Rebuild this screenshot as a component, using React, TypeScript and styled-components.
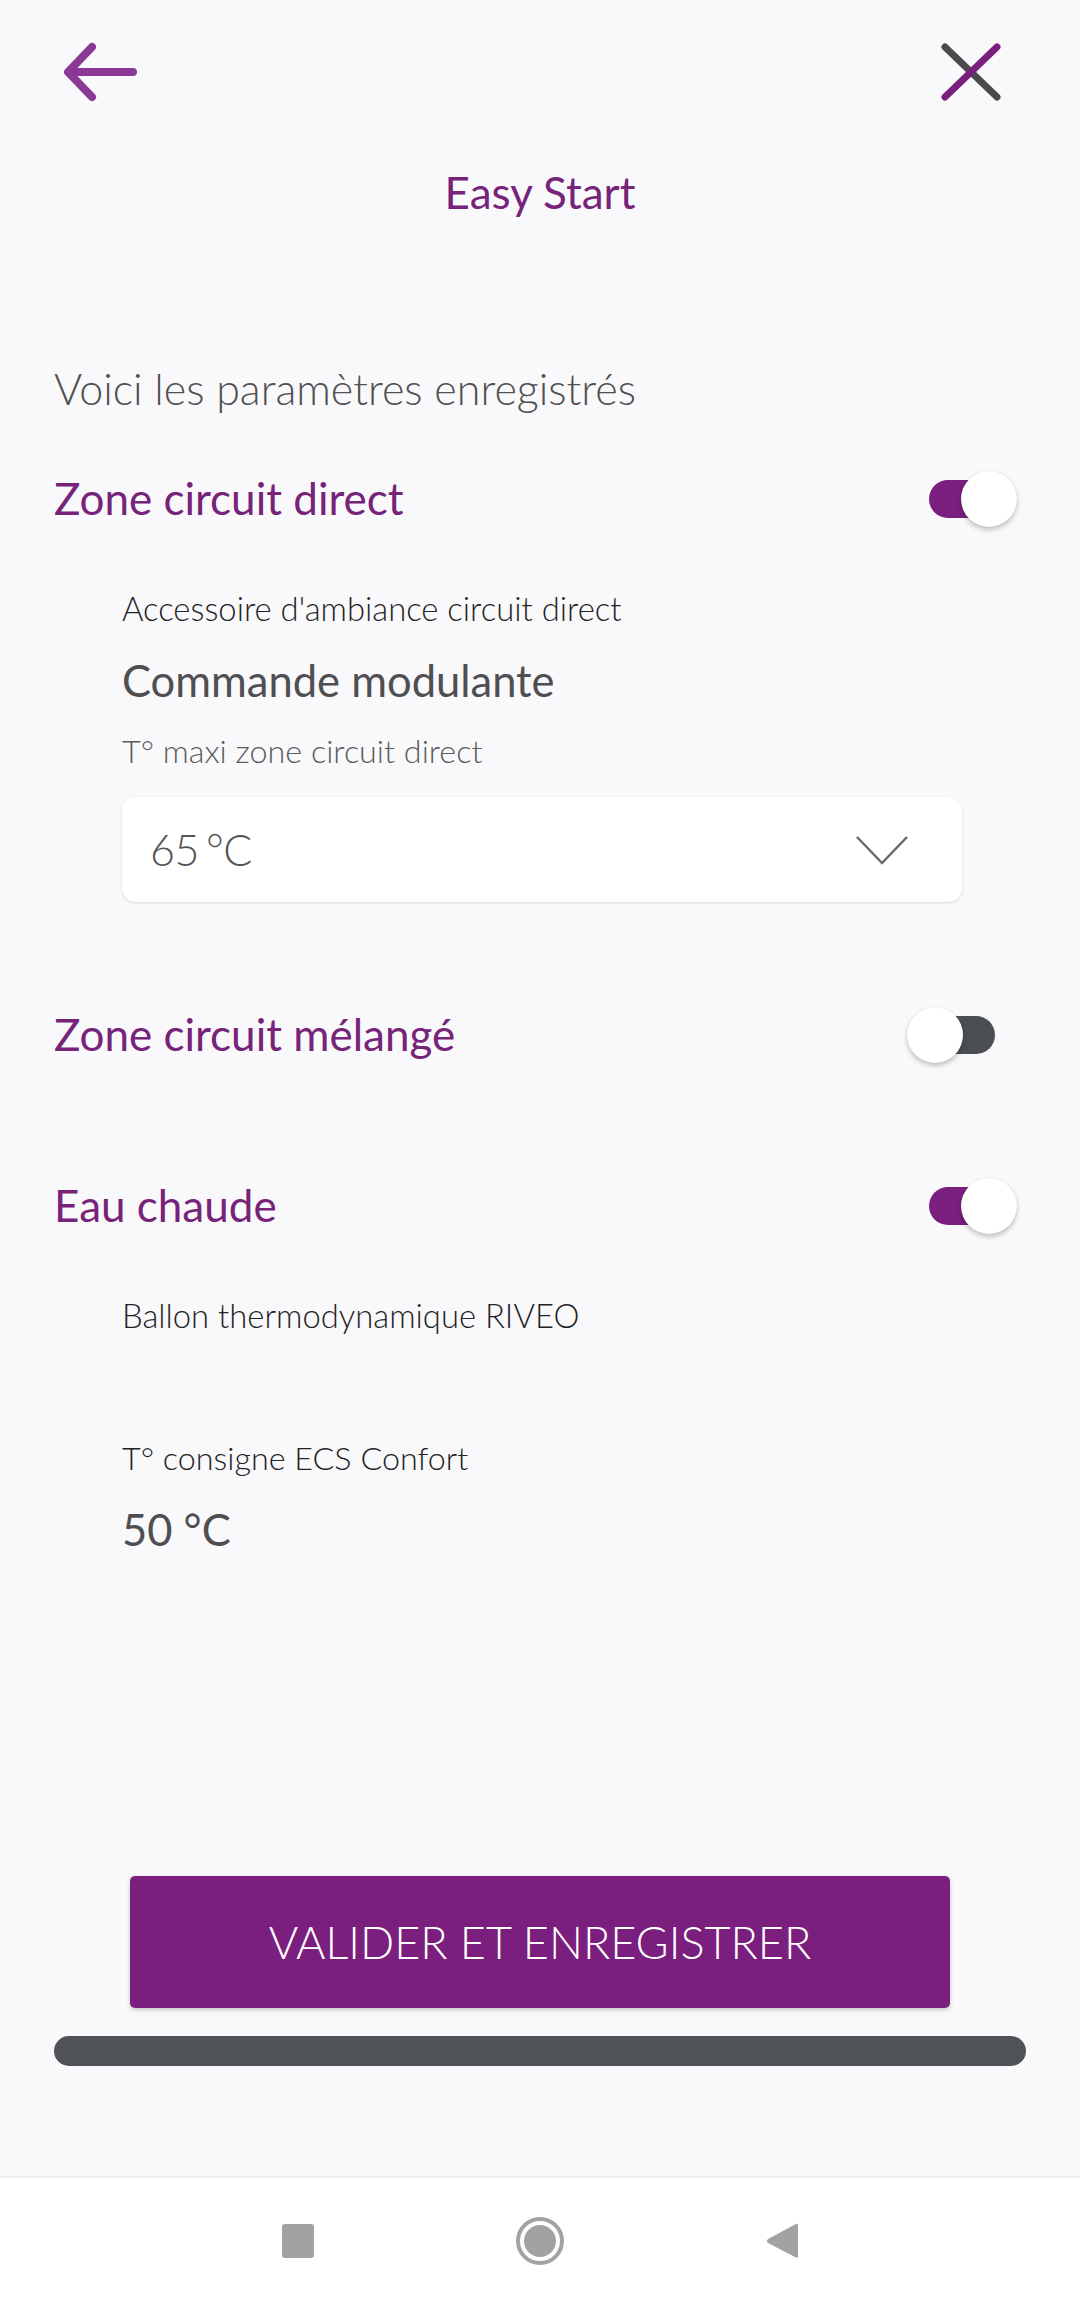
import React, { useState } from 'react';
import styled, { createGlobalStyle } from 'styled-components';

const GlobalStyle = createGlobalStyle`
  html, body {
    margin: 0;
    padding: 0;
    background: #f9f8fa;
  }
  body {
    font-family: Lato, "Open Sans", sans-serif;
  }
  * {
    box-sizing: border-box;
  }
`;

const lightFont = `"Lato Light", Lato, "Open Sans", sans-serif`;

const Screen = styled.div`
  width: 1080px;
  height: 2305px;
  display: flex;
  flex-direction: column;
  background: #f9f8fa;
  overflow: hidden;
`;

const TopBar = styled.div`
  height: 144px;
  display: flex;
  align-items: center;
  justify-content: space-between;
  padding: 0 77px 0 60px;
`;

const IconButton = styled.button`
  border: none;
  background: transparent;
  padding: 0;
  display: flex;
  cursor: pointer;
`;

const Title = styled.h1`
  margin: 23px 0 0 0;
  font-size: 44px;
  line-height: 50px;
  font-weight: 400;
  color: #762379;
  text-align: center;
`;

const Content = styled.div`
  padding: 0 85px 0 54px;
  display: flex;
  flex-direction: column;
`;

const Intro = styled.p`
  margin: 146px 0 0 0;
  font-family: ${lightFont};
  font-size: 43px;
  line-height: 52px;
  font-weight: 300;
  color: #505052;
`;

const SectionRow = styled.div<{ $gap: number }>`
  margin-top: ${(p) => p.$gap}px;
  height: 56px;
  display: flex;
  align-items: center;
  justify-content: space-between;
`;

const SectionTitle = styled.h2`
  margin: 0;
  font-size: 44px;
  line-height: 56px;
  font-weight: 400;
  color: #762379;
`;

const Track = styled.button<{ $on: boolean }>`
  position: relative;
  width: 66px;
  height: 38px;
  border: none;
  padding: 0;
  border-radius: 19px;
  background: ${(p) => (p.$on ? '#7a1f7e' : '#4b4e53')};
  cursor: pointer;
  margin-top: 2px;
`;

const Thumb = styled.span<{ $on: boolean }>`
  position: absolute;
  top: -9px;
  left: ${(p) => (p.$on ? '32px' : '-22px')};
  width: 56px;
  height: 56px;
  border-radius: 50%;
  background: #ffffff;
  box-shadow: 0 3px 5px rgba(0, 0, 0, 0.22), 0 0 2px rgba(0, 0, 0, 0.08);
`;

const SubBlock = styled.div`
  padding-left: 68px;
  display: flex;
  flex-direction: column;
`;

const Label = styled.div<{ $gap: number; $size?: number; $tone?: 'dark' | 'soft' }>`
  margin-top: ${(p) => p.$gap}px;
  font-family: ${lightFont};
  font-size: ${(p) => p.$size ?? 32.8}px;
  line-height: 38px;
  font-weight: 300;
  color: ${(p) => (p.$tone === 'soft' ? '#5c5c5e' : '#232325')};
`;

const Value = styled.div<{ $gap: number }>`
  margin-top: ${(p) => p.$gap}px;
  font-size: 43.5px;
  line-height: 52px;
  font-weight: 400;
  color: #4f4f52;
`;

const Select = styled.div`
  margin-top: 27px;
  width: 840px;
  height: 105px;
  background: #ffffff;
  border-radius: 14px;
  box-shadow: 0 1px 3px rgba(0, 0, 0, 0.13);
  display: flex;
  align-items: center;
  justify-content: space-between;
  padding: 0 54px 0 28px;
`;

const SelectText = styled.span`
  font-family: ${lightFont};
  font-size: 43px;
  font-weight: 300;
  letter-spacing: -0.5px;
  word-spacing: -4px;
  color: #555558;
`;

const PrimaryButton = styled.button`
  margin: 321px auto 0 auto;
  width: 820px;
  height: 132px;
  border: none;
  border-radius: 5px;
  background: #7a1f7e;
  color: #ffffff;
  font-family: ${lightFont};
  font-size: 45px;
  font-weight: 300;
  text-transform: uppercase;
  box-shadow: 0 2px 4px rgba(0, 0, 0, 0.2);
  cursor: pointer;
`;

const ProgressBar = styled.div`
  margin: 28px auto 0 auto;
  width: 972px;
  height: 30px;
  border-radius: 15px;
  background: #4f5256;
`;

const NavBar = styled.div`
  margin-top: 110px;
  flex: 1;
  background: #ffffff;
  border-top: 2px solid #ecebee;
  display: flex;
  align-items: center;
  justify-content: center;
  gap: 182px;
  padding-bottom: 2px;
`;

const NavSlot = styled.div`
  width: 60px;
  height: 60px;
  display: flex;
  align-items: center;
  justify-content: center;
`;

const RecentsIcon = styled.div`
  width: 32px;
  height: 34px;
  border-radius: 3px;
  background: #a2a1a4;
`;

const HomeIcon = styled.div`
  width: 48px;
  height: 48px;
  border-radius: 50%;
  border: 4px solid #a2a1a4;
  padding: 4px;
  display: flex;

  &::after {
    content: '';
    flex: 1;
    border-radius: 50%;
    background: #a2a1a4;
  }
`;

const BackArrow = () => (
  <svg width="80" height="64" viewBox="0 0 80 64">
    <g stroke="#8a3a94" strokeWidth="8" strokeLinecap="round" strokeLinejoin="round" fill="none">
      <path d="M73 32 H9" />
      <path d="M32 7 L8 32 L32 57" />
    </g>
  </svg>
);

const CloseIcon = () => (
  <svg width="64" height="64" viewBox="0 0 64 64">
    <g strokeWidth="7" strokeLinecap="round">
      <path d="M6 7 L58 57" stroke="#4a4a4c" />
      <path d="M6 57 L58 7" stroke="#7a1f7e" />
    </g>
  </svg>
);

const Chevron = () => (
  <svg width="52" height="30" viewBox="0 0 52 30">
    <path d="M1 2 L26 28 L51 2" stroke="#6a6a6d" strokeWidth="2.5" fill="none" />
  </svg>
);

const NavBack = () => (
  <svg width="34" height="38" viewBox="0 0 34 38">
    <path d="M31 2 Q33 1 33 4 V34 Q33 37 30 35 L3 21 Q1 19 3 17 Z" fill="#a2a1a4" />
  </svg>
);

const Toggle = ({ initial }: { initial: boolean }) => {
  const [on, setOn] = useState(initial);
  return (
    <Track $on={on} onClick={() => setOn(!on)} aria-label="toggle">
      <Thumb $on={on} />
    </Track>
  );
};

export default function App() {
  return (
    <>
      <GlobalStyle />
      <Screen>
        <TopBar>
          <IconButton aria-label="retour">
            <BackArrow />
          </IconButton>
          <IconButton aria-label="fermer">
            <CloseIcon />
          </IconButton>
        </TopBar>
        <Title>Easy Start</Title>
        <Content>
          <Intro>Voici les paramètres enregistrés</Intro>

          <SectionRow $gap={55}>
            <SectionTitle>Zone circuit direct</SectionTitle>
            <Toggle initial={true} />
          </SectionRow>
          <SubBlock>
            <Label $gap={64}>Accessoire d'ambiance circuit direct</Label>
            <Value $gap={26}>Commande modulante</Value>
            <Label $gap={26} $size={32.3} $tone="soft">T° maxi zone circuit direct</Label>
            <Select>
              <SelectText>65 °C</SelectText>
              <Chevron />
            </Select>
          </SubBlock>

          <SectionRow $gap={104}>
            <SectionTitle>Zone circuit mélangé</SectionTitle>
            <Toggle initial={false} />
          </SectionRow>

          <SectionRow $gap={115}>
            <SectionTitle>Eau chaude</SectionTitle>
            <Toggle initial={true} />
          </SectionRow>
          <SubBlock>
            <Label $gap={64}>Ballon thermodynamique RIVEO</Label>
            <Label $gap={104} $size={32.3}>T° consigne ECS Confort</Label>
            <Value $gap={26}>50 °C</Value>
          </SubBlock>
        </Content>

        <PrimaryButton>Valider et enregistrer</PrimaryButton>
        <ProgressBar />

        <NavBar>
          <NavSlot>
            <RecentsIcon />
          </NavSlot>
          <NavSlot>
            <HomeIcon />
          </NavSlot>
          <NavSlot>
            <NavBack />
          </NavSlot>
        </NavBar>
      </Screen>
    </>
  );
}
